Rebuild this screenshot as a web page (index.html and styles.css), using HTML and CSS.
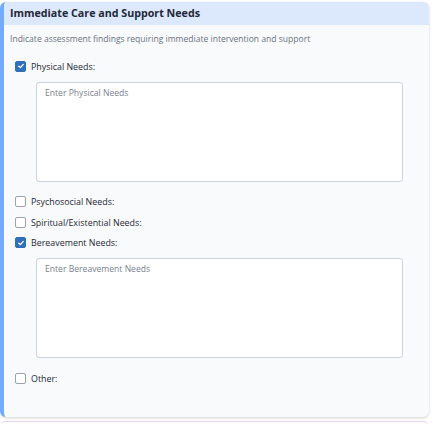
FILE: index.html
```html
<!DOCTYPE html>
<html>
<head>
<meta charset="utf-8">
<link rel="stylesheet" href="styles.css">
</head>
<body>
<section class="card">
  <header class="card-head">Immediate Care and Support Needs</header>
  <div class="card-body">
    <p class="desc">Indicate assessment findings requiring immediate intervention and support</p>
    <div class="items">
      <label class="check"><span class="box checked"><svg viewBox="0 0 10 10" width="8" height="8"><path d="M2.2 5.2 L4.2 7 L7.8 3" fill="none" stroke="#fff" stroke-width="1.6" stroke-linecap="round" stroke-linejoin="round"/></svg></span>Physical Needs:</label>
      <div class="area">Enter Physical Needs</div>
      <label class="check"><span class="box"></span>Psychosocial Needs:</label>
      <label class="check"><span class="box"></span>Spiritual/Existential Needs:</label>
      <label class="check"><span class="box checked"><svg viewBox="0 0 10 10" width="8" height="8"><path d="M2.2 5.2 L4.2 7 L7.8 3" fill="none" stroke="#fff" stroke-width="1.6" stroke-linecap="round" stroke-linejoin="round"/></svg></span>Bereavement Needs:</label>
      <div class="area">Enter Bereavement Needs</div>
      <label class="check"><span class="box"></span>Other:</label>
    </div>
  </div>
</section>
<div class="next-card"></div>
</body>
</html>
```
FILE: styles.css
```css
html, body {
  margin: 0;
  padding: 0;
  background: #ffffff;
}
body {
  font-family: "Open Sans", "Noto Sans", sans-serif;
  color: #1f2937;
}
.card {
  box-sizing: border-box;
  width: 429px;
  height: 415px;
  margin-top: 2px;
  background: #f9fafb;
  border-left: 4px solid #74acfd;
  border-radius: 6px;
  box-shadow: 0 1px 3px rgba(0, 0, 0, 0.18);
  overflow: hidden;
}
.card-head {
  height: 23px;
  line-height: 23px;
  background: #dce8fc;
  padding-left: 6px;
  font-size: 10.7px;
  font-weight: 700;
  color: #1f2937;
}
.card-body {
  padding: 7px 0 0 6px;
}
.desc {
  margin: 0;
  font-size: 8.55px;
  line-height: 14px;
  color: #6b7280;
}
.items {
  display: flex;
  flex-direction: column;
  padding-top: 10px;
  padding-left: 5px;
}
.check {
  display: flex;
  align-items: center;
  gap: 5px;
  height: 20.5px;
  font-size: 8.9px;
  color: #1f2937;
}
.box {
  box-sizing: border-box;
  width: 11px;
  height: 11px;
  border: 1px solid #9ca3af;
  border-radius: 2px;
  background: #fff;
  display: flex;
  align-items: center;
  justify-content: center;
}
.box.checked {
  background: #2f70b8;
  border-color: #2f70b8;
}
.area {
  box-sizing: border-box;
  width: 367px;
  height: 100px;
  margin: 5px 0 10px 21px;
  background: #fff;
  border: 1px solid #cdd3dc;
  border-radius: 3px;
  padding: 4px 8px;
  font-size: 8.6px;
  color: #7b8190;
}
.next-card {
  width: 429px;
  height: 4px;
  margin-top: 4px;
  border-top: 1px solid #e6d6ee;
  border-radius: 6px 6px 0 0;
}
```
